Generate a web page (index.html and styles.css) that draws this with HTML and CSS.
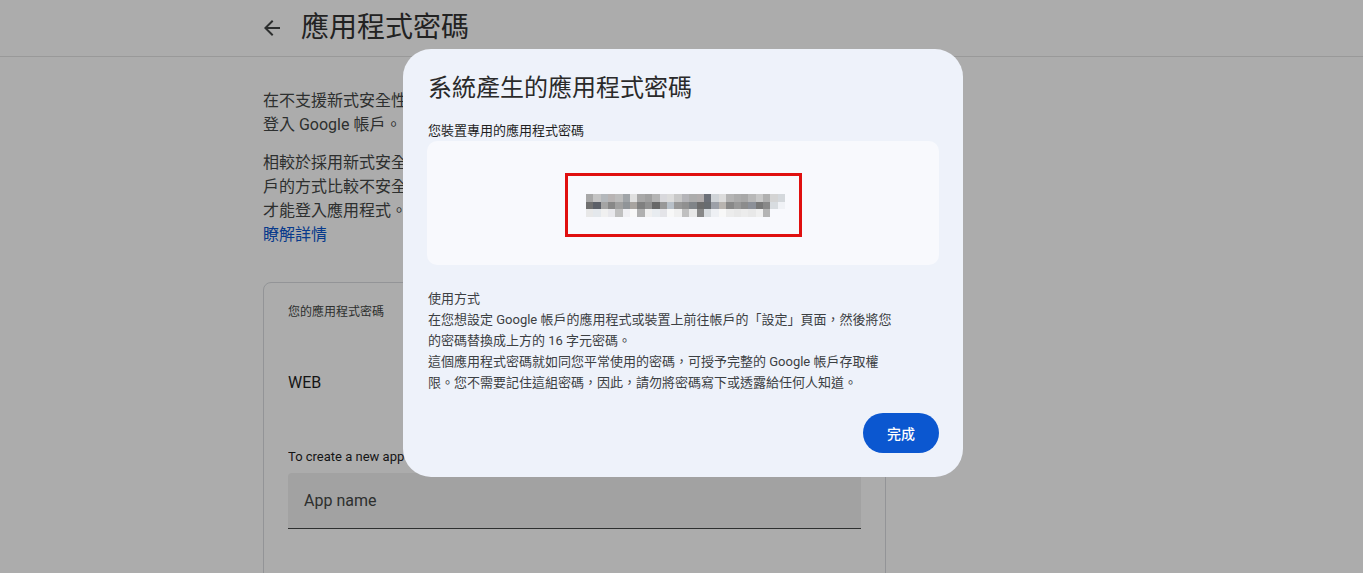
FILE: index.html
```html
<!DOCTYPE html>
<html lang="zh-Hant">
<head>
<meta charset="utf-8">
<title>應用程式密碼</title>
<link rel="stylesheet" href="styles.css">
</head>
<body>
<header class="topbar">
  <div class="topbar-inner">
    <svg class="back" width="24" height="24" viewBox="0 0 24 24"><path d="M20 11H7.83l5.59-5.59L12 4l-8 8 8 8 1.41-1.41L7.83 13H20v-2z" fill="#444746"/></svg>
    <h1 class="page-title">應用程式密碼</h1>
  </div>
</header>
<main class="page">
  <p class="intro">在不支援新式安全性標準的應用程式和裝置上，您可以使用應用程式密碼<br>登入 Google 帳戶。</p>
  <p class="intro">相較於採用新式安全標準的應用程式和裝置，使用應用程式密碼登入帳<br>戶的方式比較不安全。因此，您必須先啟用兩步驟驗證，<br>才能登入應用程式。<br><a class="link" href="#">瞭解詳情</a></p>
  <section class="card">
    <div class="card-label">您的應用程式密碼</div>
    <div class="card-item">WEB</div>
    <div class="card-hint">To create a new app specific password, type a name for it below...</div>
    <div class="field">App name</div>
  </section>
</main>
<div class="scrim"></div>
<div class="dialog">
  <h2 class="dialog-title">系統產生的應用程式密碼</h2>
  <div class="dialog-label">您裝置專用的應用程式密碼</div>
  <div class="pw-box">
    <div class="pw-frame">
      <div class="pixels">
        <span style="background:#a8a8a8"></span><span style="background:#c4c4c4"></span><span style="background:#b4b8bc"></span><span style="background:#b8b4b4"></span><span style="background:#bcbcbc"></span><span style="background:#a0a4a8"></span><span style="background:#e0e0e0"></span><span style="background:#a8a8a8"></span><span style="background:#a0a0a0"></span><span style="background:#b4b4b4"></span><span style="background:#d8d8dc"></span><span style="background:#dcdcdc"></span><span style="background:#c8c8c8"></span><span style="background:#b4b4b8"></span><span style="background:#acacac"></span><span style="background:#b0acac"></span><span style="background:#6c7078"></span><span style="background:#d0d4d8"></span><span style="background:#dcdcdc"></span><span style="background:#b4b4b4"></span><span style="background:#acacac"></span><span style="background:#a8a8a8"></span><span style="background:#b8b8b8"></span><span style="background:#c8c8c8"></span><span style="background:#b0b0b0"></span><span style="background:#d4d4d4"></span><span style="background:#d4d8dc"></span>
        <span style="background:#707070"></span><span style="background:#5c6068"></span><span style="background:#a4a4a4"></span><span style="background:#888888"></span><span style="background:#a0a0a0"></span><span style="background:#909498"></span><span style="background:#a8a4a0"></span><span style="background:#808080"></span><span style="background:#909090"></span><span style="background:#686868"></span><span style="background:#989898"></span><span style="background:#b8c0c8"></span><span style="background:#989898"></span><span style="background:#909090"></span><span style="background:#808488"></span><span style="background:#6c6c6c"></span><span style="background:#686c70"></span><span style="background:#9ca0a8"></span><span style="background:#b8b4b0"></span><span style="background:#888888"></span><span style="background:#989898"></span><span style="background:#8c8c8c"></span><span style="background:#8c9098"></span><span style="background:#787878"></span><span style="background:#888888"></span><span style="background:#d8dce0"></span><span style="background:#f0f2f6"></span>
        <span style="background:#e8e8e8"></span><span style="background:#e4e8ec"></span><span style="background:#f0f0f0"></span><span style="background:#e8e8ec"></span><span style="background:#c0c0c0"></span><span style="background:#f0f0f4"></span><span style="background:#f8f8f8"></span><span style="background:#b0b0b0"></span><span style="background:#f0f0f0"></span><span style="background:#e8ecf0"></span><span style="background:#e4e4e8"></span><span style="background:#f8f8f8"></span><span style="background:#f0f0f0"></span><span style="background:#c0c0c0"></span><span style="background:#e8e8e8"></span><span style="background:#888888"></span><span style="background:#d8dce0"></span><span style="background:#eef0f4"></span><span style="background:#f8f8f8"></span><span style="background:#ececec"></span><span style="background:#e8e8e8"></span><span style="background:#ececec"></span><span style="background:#e8e8e8"></span><span style="background:#f0f0f0"></span><span style="background:#b4b4b4"></span><span style="background:#f8f9fd"></span><span style="background:#f8f9fd"></span>
      </div>
    </div>
  </div>
  <div class="howto">
    <div>使用方式</div>
    <div>在您想設定 Google 帳戶的應用程式或裝置上前往帳戶的「設定」頁面，然後將您<br>的密碼替換成上方的 16 字元密碼。</div>
    <div>這個應用程式密碼就如同您平常使用的密碼，可授予完整的 Google 帳戶存取權<br>限。您不需要記住這組密碼，因此，請勿將密碼寫下或透露給任何人知道。</div>
  </div>
  <div class="actions">
    <button class="done">完成</button>
  </div>
</div>
</body>
</html>
```

FILE: styles.css
```css
* { box-sizing: border-box; }
html, body { margin: 0; padding: 0; }
body {
  background: #ffffff;
  font-family: "Roboto", "Noto Sans CJK TC", "Liberation Sans", sans-serif;
  color: #1f1f1f;
  width: 1363px;
  height: 573px;
  overflow: hidden;
}
.topbar {
  height: 57px;
  border-bottom: 1px solid #e3e3e3;
}
.topbar-inner {
  margin-left: 260px;
  height: 56px;
  display: flex;
  align-items: center;
  gap: 17px;
}
.back { display: block; }
.page-title {
  margin: 0;
  font-size: 28px;
  font-weight: 400;
  line-height: 36px;
  color: #333333;
}
.page {
  width: 623px;
  margin-left: 263px;
  padding-top: 32px;
}
.intro {
  margin: 0 0 14px;
  font-size: 16px;
  line-height: 24px;
  color: #444746;
}
.link { color: #0b57d0; text-decoration: none; }
.card {
  margin-top: 35px;
  border: 1px solid #dadce0;
  border-radius: 8px;
  padding: 21px 24px 0;
  height: 300px;
}
.card-label {
  font-size: 12px;
  line-height: 16px;
  color: #444746;
}
.card-item {
  margin-top: 51px;
  font-size: 16px;
  line-height: 24px;
  color: #1f1f1f;
}
.card-hint {
  margin-top: 54px;
  font-size: 13px;
  line-height: 16px;
  color: #1f1f1f;
  white-space: nowrap;
  overflow: hidden;
}
.field {
  margin-top: 8px;
  height: 56px;
  background: #f0f0f0;
  border-bottom: 1px solid #444746;
  border-radius: 4px 4px 0 0;
  padding-left: 16px;
  display: flex;
  align-items: center;
  font-size: 16px;
  color: #444746;
}
.scrim {
  position: fixed;
  inset: 0;
  background: rgba(0, 0, 0, 0.325);
  z-index: 1;
}
.dialog {
  position: absolute;
  left: 403px;
  top: 49px;
  width: 560px;
  height: 428px;
  z-index: 2;
  background: #eef2fa;
  border-radius: 28px;
  padding: 23px 24px 24px;
  display: flex;
  flex-direction: column;
}
.dialog-title {
  margin: 0 0 0 1px;
  font-size: 24px;
  font-weight: 400;
  line-height: 32px;
  color: #2a2a2a;
}
.dialog-label {
  margin: 17px 0 0 1px;
  font-size: 13px;
  line-height: 20px;
  font-weight: 400;
  color: #1f1f1f;
}
.pw-box {
  height: 124px;
  background: #f8f9fd;
  border-radius: 10px;
  display: flex;
  align-items: center;
  justify-content: center;
}
.pw-frame {
  width: 237px;
  height: 64px;
  border: 3px solid #e01010;
  display: flex;
  align-items: center;
  justify-content: center;
  padding-left: 5px;
  margin-top: 4px;
}
.pixels {
  display: grid;
  grid-template-columns: repeat(27, 7.4px);
  grid-template-rows: 8px 7px 8px;
}
.pixels span { display: block; }
.howto {
  margin: 23px 0 0 1px;
  font-size: 13px;
  line-height: 21px;
  color: #3c4043;
  white-space: nowrap;
}
.actions {
  margin-top: auto;
  display: flex;
  justify-content: flex-end;
}
.done {
  width: 76px;
  height: 40px;
  border: 0;
  border-radius: 20px;
  background: #0b57d0;
  color: #ffffff;
  font-family: "Roboto", "Noto Sans CJK TC", sans-serif;
  font-size: 14px;
  font-weight: 500;
  cursor: pointer;
}
```
